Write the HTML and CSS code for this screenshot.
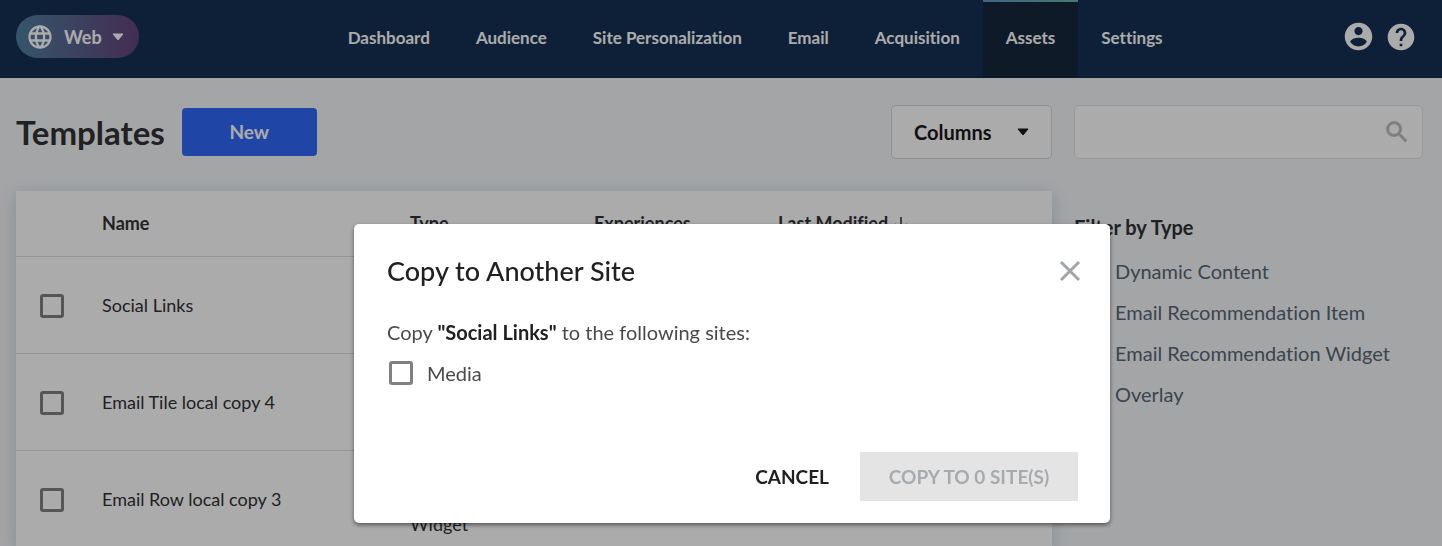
FILE: index.html
```
<!DOCTYPE html>
<html lang="en">
  <head>
    <meta charset="utf-8" />
    <title>Templates</title>
    <meta name="viewport" content="width=device-width, initial-scale=1" />
    <link rel="stylesheet" href="styles.css">
  </head>
  <body>
    <header class="topbar">
      <button class="site-switch" type="button">
        <svg width="28" height="28" viewBox="0 0 24 24" fill="currentColor" aria-hidden="true">
          <path d="M11.99 2C6.47 2 2 6.48 2 12s4.47 10 9.99 10C17.52 22 22 17.52 22 12S17.52 2 11.99 2zm6.93 6h-2.95c-.32-1.25-.78-2.45-1.38-3.56 1.84.63 3.37 1.91 4.33 3.56zM12 4.04c.83 1.2 1.48 2.53 1.91 3.96h-3.82c.43-1.43 1.08-2.76 1.91-3.96zM4.26 14C4.1 13.36 4 12.69 4 12s.1-1.36.26-2h3.38c-.08.66-.14 1.32-.14 2s.06 1.34.14 2H4.26zm.82 2h2.95c.32 1.25.78 2.45 1.38 3.56-1.84-.63-3.37-1.9-4.33-3.56zm2.95-8H5.08c.96-1.66 2.49-2.93 4.33-3.56C8.81 5.55 8.35 6.75 8.03 8zM12 19.96c-.83-1.2-1.48-2.53-1.91-3.96h3.82c-.43 1.43-1.08 2.76-1.91 3.96zM14.34 14H9.66c-.09-.66-.16-1.32-.16-2s.07-1.35.16-2h4.68c.09.65.16 1.32.16 2s-.07 1.34-.16 2zm.25 5.56c.6-1.11 1.06-2.31 1.38-3.56h2.95c-.96 1.65-2.49 2.93-4.33 3.56zM16.36 14c.08-.66.14-1.32.14-2s-.06-1.34-.14-2h3.38c.16.64.26 1.31.26 2s-.1 1.36-.26 2h-3.38z" />
        </svg>
        Web
        <svg width="12" height="8" viewBox="0 0 12 8" fill="currentColor" aria-hidden="true">
          <path d="M1 1h10L6 7z" stroke="currentColor" stroke-linejoin="round" />
        </svg>
      </button>
      <nav class="nav">
        <a href="#">Dashboard</a>
        <a href="#">Audience</a>
        <a href="#">Site Personalization</a>
        <a href="#">Email</a>
        <a href="#">Acquisition</a>
        <a href="#" class="active">Assets</a>
        <a href="#">Settings</a>
      </nav>
      <div class="topbar-icons">
        <button type="button" aria-label="Account">
          <svg width="33" height="33" viewBox="0 0 24 24" fill="currentColor">
            <path d="M12 2C6.48 2 2 6.48 2 12s4.48 10 10 10 10-4.48 10-10S17.52 2 12 2zm0 3c1.66 0 3 1.34 3 3s-1.34 3-3 3-3-1.34-3-3 1.34-3 3-3zm0 14.2c-2.5 0-4.71-1.28-6-3.22.03-1.99 4-3.08 6-3.08 1.99 0 5.97 1.09 6 3.08-1.29 1.94-3.5 3.22-6 3.22z" />
          </svg>
        </button>
        <button type="button" aria-label="Help">
          <svg width="32" height="32" viewBox="0 0 24 24" fill="currentColor">
            <path d="M12 2C6.48 2 2 6.48 2 12s4.48 10 10 10 10-4.48 10-10S17.52 2 12 2zm1 17h-2v-2h2v2zm2.07-7.75l-.9.92C13.45 12.9 13 13.5 13 15h-2v-.5c0-1.1.45-2.1 1.17-2.83l1.24-1.26c.37-.36.59-.86.59-1.41 0-1.1-.9-2-2-2s-2 .9-2 2H8c0-2.21 1.79-4 4-4s4 1.79 4 4c0 .88-.36 1.68-.93 2.25z" />
          </svg>
        </button>
      </div>
    </header>

    <main class="page">
      <div class="toolbar">
        <h1>Templates</h1>
        <button class="btn-new" type="button">New</button>
        <button class="btn-columns" type="button">
          Columns
          <svg width="12" height="8" viewBox="0 0 12 8" fill="currentColor" aria-hidden="true">
            <path d="M1 1h10L6 7z" stroke="currentColor" stroke-linejoin="round" />
          </svg>
        </button>
      </div>
      <form class="search">
        <input type="search" aria-label="Search templates" />
        <svg width="28" height="28" viewBox="0 0 24 24" fill="currentColor" aria-hidden="true">
          <path d="M15.5 14h-.79l-.28-.27C15.41 12.59 16 11.11 16 9.5 16 5.91 13.09 3 9.5 3S3 5.91 3 9.5 5.91 16 9.5 16c1.61 0 3.09-.59 4.23-1.57l.27.28v.79l5 4.99L20.49 19l-4.99-5zm-6 0C7.01 14 5 11.99 5 9.5S7.01 5 9.5 5 14 7.01 14 9.5 11.99 14 9.5 14z" stroke="currentColor" stroke-width=".5" />
        </svg>
      </form>

      <table class="templates">
        <colgroup>
          <col class="col-check" />
          <col class="col-name" />
          <col class="col-type" />
          <col class="col-exp" />
          <col />
        </colgroup>
        <thead>
          <tr>
            <td></td>
            <th>Name</th>
            <th>Type</th>
            <th>Experiences</th>
            <th>
              Last Modified
              <svg class="sort" width="16" height="16" viewBox="0 0 16 16" fill="none" stroke="currentColor" stroke-width="1.5" aria-hidden="true">
                <path d="M8 0v13M2 7l6 6 6-6" />
              </svg>
            </th>
          </tr>
        </thead>
        <tbody>
          <tr>
            <td><input type="checkbox" id="row-1" /></td>
            <td><label for="row-1">Social Links</label></td>
            <td></td>
            <td></td>
            <td></td>
          </tr>
          <tr>
            <td><input type="checkbox" id="row-2" /></td>
            <td><label for="row-2">Email Tile local copy 4</label></td>
            <td></td>
            <td></td>
            <td></td>
          </tr>
          <tr>
            <td><input type="checkbox" id="row-3" /></td>
            <td><label for="row-3">Email Row local copy 3</label></td>
            <td>Email Recommendation Widget</td>
            <td></td>
            <td></td>
          </tr>
        </tbody>
      </table>

      <aside class="filters">
        <h2>Filter by Type</h2>
        <label><input type="checkbox" /> Dynamic Content</label>
        <label><input type="checkbox" /> Email Recommendation Item</label>
        <label><input type="checkbox" /> Email Recommendation Widget</label>
        <label><input type="checkbox" /> Overlay</label>
      </aside>
    </main>

    <div class="overlay">
      <div class="dialog" role="dialog" aria-modal="true" aria-labelledby="dialog-title">
        <div class="dialog-head">
          <h2 id="dialog-title">Copy to Another Site</h2>
          <button class="close" type="button" aria-label="Close">
            <svg width="22" height="22" viewBox="0 0 22 22" fill="none" stroke="currentColor" stroke-width="3">
              <path d="M2 2l18 18M20 2L2 20" />
            </svg>
          </button>
        </div>
        <p>Copy <strong>"Social Links"</strong> to the following sites:</p>
        <label class="site"><input type="checkbox" /> Media</label>
        <div class="dialog-actions">
          <button class="btn-cancel" type="button">CANCEL</button>
          <button class="btn-copy" type="button" disabled>COPY TO 0 SITE(S)</button>
        </div>
      </div>
    </div>
  </body>
</html>
```
FILE: styles.css
```
* {
  box-sizing: border-box;
}
body {
  margin: 0;
  min-height: 100vh;
  overflow: hidden;
  background: #f5f6f9;
  color: #303234;
  font-family: Lato, 'Open Sans', sans-serif;
  font-size: 20px;
  font-variant-ligatures: none;
  line-height: 24px;
}
h1,
h2,
p {
  margin: 0;
}
button {
  border: 0;
  padding: 0;
  background: none;
  color: inherit;
  font: inherit;
  cursor: pointer;
}
svg {
  display: block;
  flex: none;
}
input[type='checkbox'] {
  appearance: none;
  flex: none;
  display: block;
  width: 24px;
  height: 24px;
  margin: 0;
  border: 3px solid #808080;
  border-radius: 3px;
}

.topbar {
  display: flex;
  align-items: center;
  height: 78px;
  padding: 0 25px 4px 16px;
  background: #163154;
  border-bottom: 1px solid #132640;
  color: #fff;
}
.site-switch {
  display: flex;
  align-items: center;
  gap: 10px;
  height: 43px;
  margin-right: 186px;
  padding: 0 15px 0 10px;
  border-radius: 22px;
  background: linear-gradient(90deg, #4f809f, #66437c);
  font-size: 18px;
  font-weight: 700;
}
.nav {
  display: flex;
  align-self: stretch;
  margin-bottom: -4px;
  margin-right: auto;
}
.nav a {
  display: flex;
  align-items: center;
  padding: 0 23px 4px;
  border-top: 2px solid transparent;
  color: #fff;
  font-size: 17px;
  font-weight: 700;
  text-decoration: none;
}
.nav a.active {
  background: #16283d;
  border-image: linear-gradient(90deg, #6095cf, #64b8a0) 1;
  border-width: 2px 0 0;
}
.topbar-icons {
  display: flex;
  align-items: center;
  gap: 10px;
}

.page {
  display: grid;
  grid-template-columns: 1fr 349px;
  align-items: start;
  gap: 32px 22px;
  padding: 27px 19px 0 16px;
}
.toolbar {
  display: flex;
  align-items: center;
  height: 54px;
}
.toolbar h1 {
  margin-right: 17px;
  font-size: 33px;
  font-weight: 700;
}
.btn-new {
  width: 135px;
  height: 48px;
  border-radius: 4px;
  background: #2f68f9;
  color: #fff;
  font-size: 19px;
  font-weight: 700;
}
.btn-columns {
  display: flex;
  align-items: center;
  justify-content: space-between;
  width: 161px;
  height: 54px;
  margin-left: auto;
  padding: 0 22px;
  border: 1px solid #d2d8dd;
  border-radius: 5px;
  background: #fff;
  color: #191919;
  font-weight: 700;
}
.search {
  display: flex;
  align-items: center;
  height: 54px;
  padding-right: 11px;
  border: 1px solid #e3e5e8;
  border-radius: 5px;
  background: #fff;
  color: #bdbabb;
}
.search input {
  flex: 1;
  min-width: 0;
  height: 100%;
  border: 0;
  background: none;
  font: inherit;
}

.templates {
  width: 100%;
  table-layout: fixed;
  border-collapse: collapse;
  background: #fff;
  box-shadow: 0 4px 16px rgba(70, 130, 150, 0.3);
  font-size: 18px;
  line-height: 25px;
}
.templates th {
  padding: 0;
  text-align: left;
}
.templates td {
  padding: 2px 24px 0 0;
}
.templates tr {
  height: 97px;
  border-bottom: 1px solid #dedede;
}
.templates thead tr {
  height: 65px;
}
.templates input {
  margin-left: 24px;
}
.col-check {
  width: 86px;
}
.col-name {
  width: 308px;
}
.col-type,
.col-exp {
  width: 184px;
}
.sort {
  display: inline-block;
  vertical-align: middle;
}

.filters {
  display: flex;
  flex-direction: column;
  gap: 17px;
  padding-top: 24px;
  color: #586873;
}
.filters h2 {
  margin-bottom: 3px;
  color: #303234;
  font-size: 20px;
}
.filters label {
  display: flex;
  align-items: center;
  gap: 12px;
  padding-left: 5px;
}

.overlay {
  position: fixed;
  inset: 0;
  display: flex;
  align-items: flex-start;
  justify-content: center;
  padding: 224px 0 0 22px;
  background: rgba(0, 0, 0, 0.33);
}
.dialog {
  width: 756px;
  padding: 32px 32px 22px 33px;
  border-radius: 5px;
  background: #fff;
  box-shadow: 0 2px 4px rgba(0, 0, 0, 0.5);
  color: #4a4a4a;
}
.dialog-head {
  display: flex;
  align-items: center;
  justify-content: space-between;
  height: 30px;
  margin-bottom: 34px;
}
.dialog h2 {
  color: #212121;
  font-size: 27px;
  font-weight: 500;
}
.dialog strong {
  color: #212121;
}
.close {
  margin-right: -3px;
  color: #a0a5aa;
}
.site {
  display: flex;
  align-items: center;
  gap: 14px;
  margin: 17px 0 67px 2px;
}
.dialog-actions {
  display: flex;
  justify-content: flex-end;
  gap: 31px;
}
.dialog-actions button {
  height: 49px;
  font-size: 19px;
  font-weight: 700;
}
.btn-cancel {
  color: #212121;
}
.dialog-actions .btn-copy {
  width: 218px;
  background: #e4e4e4;
  color: #a6abaf;
}
```
